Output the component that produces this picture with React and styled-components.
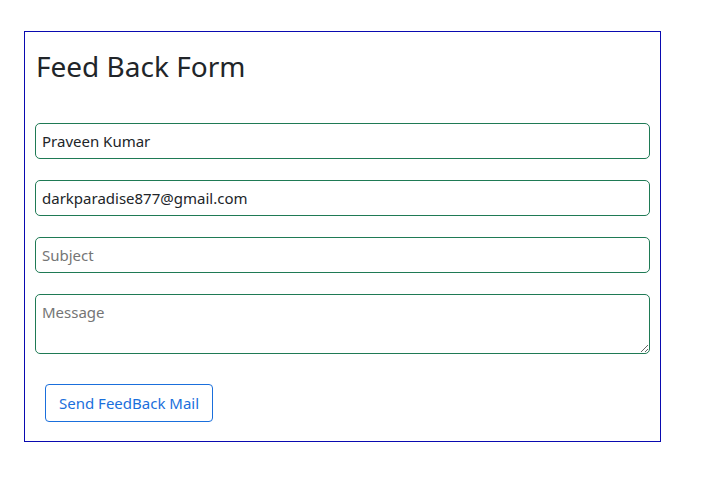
import React from "react";
import styled, { createGlobalStyle } from "styled-components";

const Global = createGlobalStyle`
  html, body { margin: 0; padding: 0; background: #fff; }
  body { font-family: "Noto Sans", "Open Sans", sans-serif; color: #212529; }
  * { box-sizing: border-box; }
`;

const Page = styled.div`
  padding: 31px 0 0 24px;
`;

const Card = styled.form`
  width: 637px;
  height: 411px;
  border: 1px solid #0a0ab0;
  padding: 0 10px 0 10px;
  display: flex;
  flex-direction: column;
`;

const Title = styled.h1`
  margin: 15px 0 0 1px;
  font-size: 28px;
  font-weight: 400;
  line-height: 38px;
  color: #212529;
`;

const Fields = styled.div`
  margin-top: 38px;
  display: flex;
  flex-direction: column;
  gap: 21px;
`;

const Field = styled.input`
  width: 615px;
  height: 36px;
  border: 1px solid #1f7a55;
  border-radius: 5px;
  padding: 0 6px;
  font-family: inherit;
  font-size: 15px;
  color: #212529;
  outline: none;
  &::placeholder { color: #757575; }
`;

const Area = styled.textarea`
  width: 615px;
  height: 60px;
  border: 1px solid #1f7a55;
  border-radius: 5px;
  padding: 6px 6px;
  font-family: inherit;
  font-size: 15px;
  line-height: 22px;
  color: #212529;
  outline: none;
  resize: vertical;
  display: block;
  &::placeholder { color: #757575; }
`;

const Button = styled.button`
  align-self: flex-start;
  margin: 30px 0 0 10px;
  height: 38px;
  padding: 0 13px;
  border: 1px solid #1a6fdc;
  border-radius: 4px;
  background: #fff;
  color: #1a6fdc;
  font-family: inherit;
  font-size: 15px;
  cursor: pointer;
`;

export default function App() {
  return (
    <Page>
      <Global />
      <Card onSubmit={(e) => e.preventDefault()}>
        <Title>Feed Back Form</Title>
        <Fields>
          <Field type="text" defaultValue="Praveen Kumar" placeholder="Name" />
          <Field type="email" defaultValue="darkparadise877@gmail.com" placeholder="Email" />
          <Field type="text" placeholder="Subject" />
          <Area placeholder="Message" />
        </Fields>
        <Button type="submit">Send FeedBack Mail</Button>
      </Card>
    </Page>
  );
}
